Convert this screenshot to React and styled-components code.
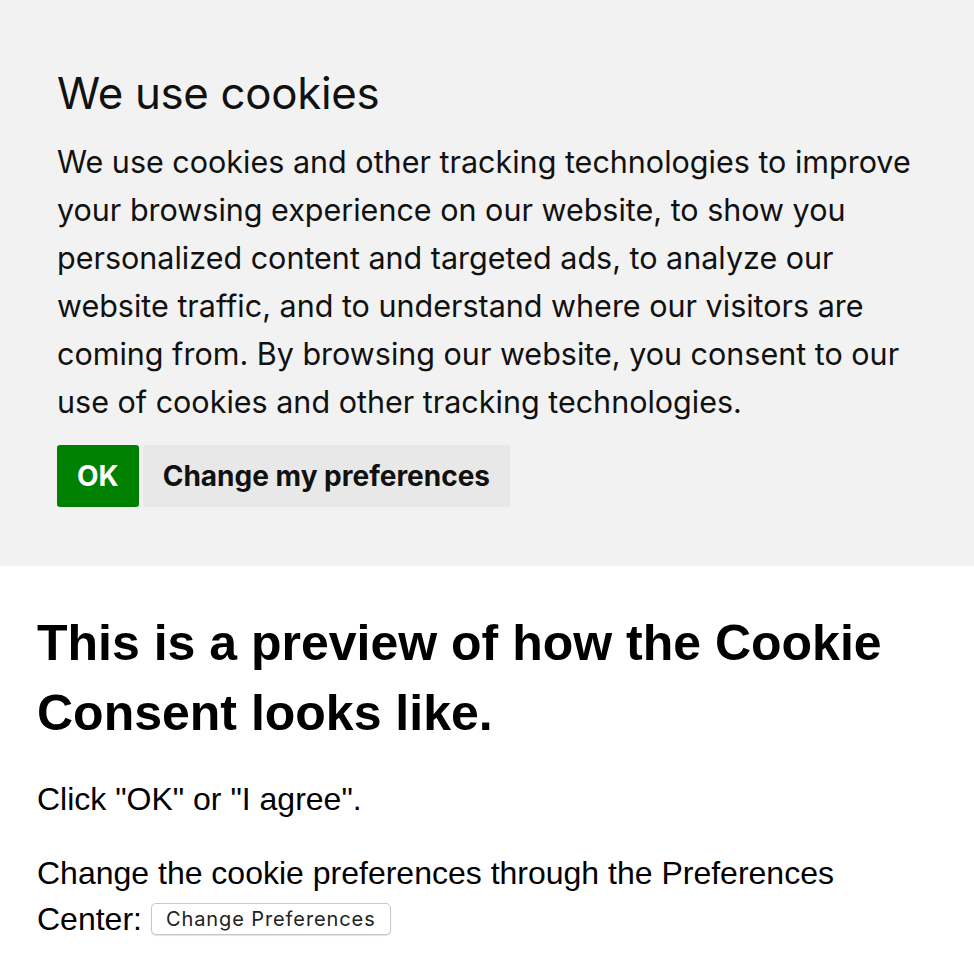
import styled, { createGlobalStyle } from "styled-components";

const GlobalStyle = createGlobalStyle`
  html, body {
    margin: 0;
    padding: 0;
    background: #fff;
  }
`;

const Banner = styled.section`
  background: #f2f2f2;
  padding: 66px 57px 59px;
  font-family: Inter, "Noto Sans", sans-serif;
  color: #111;
`;

const BannerTitle = styled.h2`
  margin: 0 0 16px;
  font-size: 43.8px;
  font-weight: 400;
  line-height: 56px;
  letter-spacing: -0.3px;
`;

const BannerText = styled.p`
  margin: 0 0 19px;
  font-size: 30.5px;
  line-height: 48px;
`;

const Actions = styled.div`
  display: flex;
  gap: 4px;
`;

const ActionButton = styled.button`
  height: 62px;
  padding: 0 20px;
  border: none;
  border-radius: 3px;
  font-family: Inter, "Noto Sans", sans-serif;
  font-size: 28px;
  font-weight: 700;
  background: ${(p) => (p.$primary ? "#008000" : "#e8e8e8")};
  color: ${(p) => (p.$primary ? "#fff" : "#111")};
`;

const Content = styled.main`
  padding: 42px 37px 20px;
  font-family: "Liberation Sans", Arial, sans-serif;
  color: #000;
`;

const Heading = styled.h1`
  margin: 0 0 28px;
  font-size: 50px;
  line-height: 70px;
  font-weight: 700;
`;

const Para = styled.p`
  margin: 0 0 28px;
  font-size: 32px;
  line-height: 46px;
`;

const SmallButton = styled.button`
  height: 32px;
  padding: 0 14px;
  margin-left: 9px;
  vertical-align: 4px;
  background: #fff;
  border: 1px solid #c8c8c8;
  border-radius: 5px;
  box-shadow: 0 1px 1px rgba(0, 0, 0, 0.12);
  font-family: Inter, "Noto Sans", sans-serif;
  font-size: 20px;
  letter-spacing: 0.9px;
  color: #222;
`;

export default function App() {
  return (
    <>
      <GlobalStyle />
      <Banner>
        <BannerTitle>We use cookies</BannerTitle>
        <BannerText>
          We use cookies and other tracking technologies to improve your
          browsing experience on our website, to show you personalized content
          and targeted ads, to analyze our website traffic, and to understand
          where our visitors are coming from. By browsing our website, you
          consent to our use of cookies and other tracking technologies.
        </BannerText>
        <Actions>
          <ActionButton $primary>OK</ActionButton>
          <ActionButton>Change my preferences</ActionButton>
        </Actions>
      </Banner>
      <Content>
        <Heading>This is a preview of how the Cookie Consent looks like.</Heading>
        <Para>Click "OK" or "I agree".</Para>
        <Para>
          Change the cookie preferences through the Preferences Center:
          <SmallButton>Change Preferences</SmallButton>
        </Para>
      </Content>
    </>
  );
}
